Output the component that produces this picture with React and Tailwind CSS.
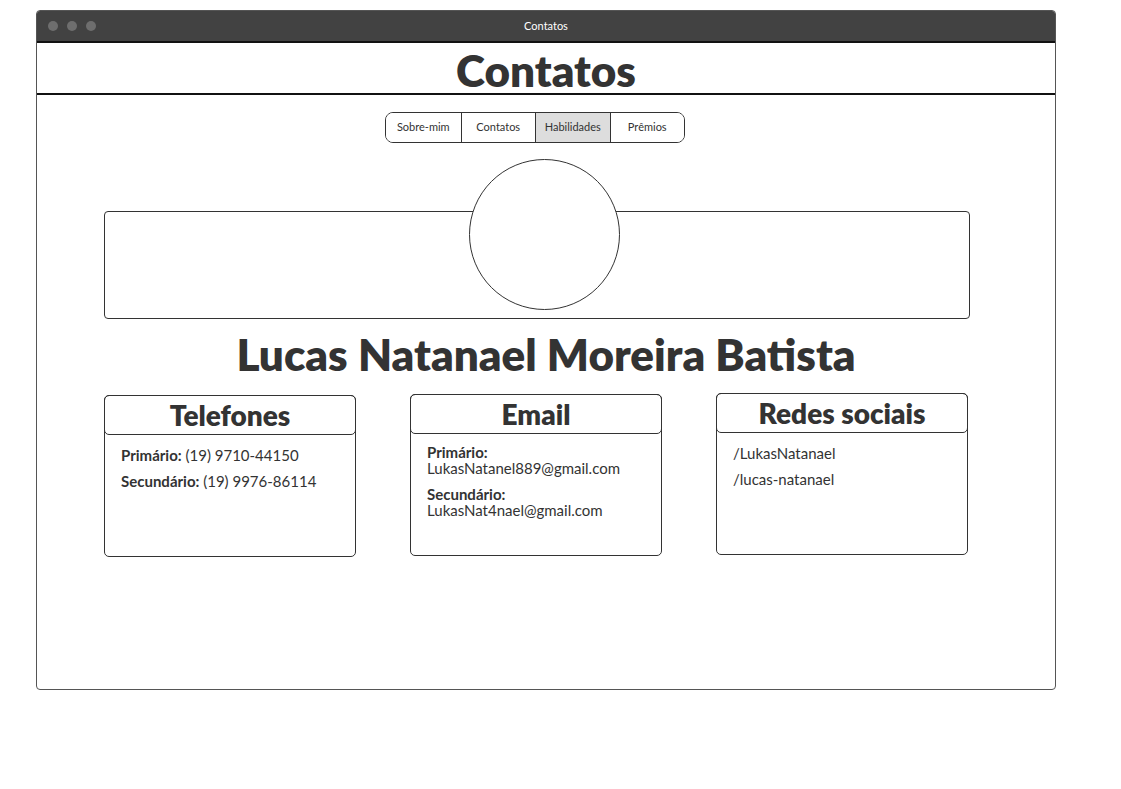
import React from "react";

const tabs = ["Sobre-mim", "Contatos", "Habilidades", "Prêmios"];

const Card = ({ title, children, className }) => {
  return (
    <div className={`w-[252px] h-[162px] border border-[#333] rounded-[5px] ${className}`}>
      <div className="-mx-px -mt-px h-[40px] border border-[#333] rounded-[5px] flex items-center justify-center">
        <h3 className="text-[28px] font-extrabold text-[#333] leading-none">{title}</h3>
      </div>
      <div className="pl-[16px] pr-2 pt-[10px] text-[15px] text-[#333]">{children}</div>
    </div>
  );
};

export default function App() {
  return (
    <div className="w-[1121px] h-[789px] bg-white pt-[10px] pl-[36px]" style={{ fontFamily: "Lato, 'Open Sans', sans-serif" }}>
      <div className="w-[1020px] h-[680px] border border-[#555] rounded-[4px] overflow-hidden flex flex-col">
        {/* title bar */}
        <div className="relative h-[32px] bg-[#424242] border-b-2 border-[#111] flex items-center shrink-0">
          <div className="flex gap-[9px] pl-[11px]">
            <span className="w-[10px] h-[10px] rounded-full bg-[#6e6e6e]" />
            <span className="w-[10px] h-[10px] rounded-full bg-[#6e6e6e]" />
            <span className="w-[10px] h-[10px] rounded-full bg-[#6e6e6e]" />
          </div>
          <span className="absolute inset-x-0 text-center text-[11px] text-white">Contatos</span>
        </div>

        {/* header */}
        <div className="h-[52px] border-b-2 border-[#111] flex items-center justify-center shrink-0 pt-[4px]">
          <h1 className="text-[44px] font-extrabold text-[#333] leading-none">Contatos</h1>
        </div>

        {/* tabs */}
        <div className="flex justify-center mt-[17px] pr-[22px]">
          <div className="flex h-[31px] border border-[#333] rounded-[8px] overflow-hidden">
            {tabs.map((t, i) => (
              <div
                key={t}
                className={`w-[74.5px] flex items-center justify-center text-[11px] text-[#333] ${
                  i > 0 ? "border-l border-[#333]" : ""
                } ${t === "Habilidades" ? "bg-[#ddd]" : "bg-white"}`}
              >
                {t}
              </div>
            ))}
          </div>
        </div>

        {/* banner */}
        <div className="relative mt-[16px] h-[160px] pl-[67px]">
          <div className="mt-[52px] w-[866px] h-[108px] border border-[#333] rounded-[4px]" />
          <div className="absolute top-0 left-[432px] w-[151px] h-[151px] rounded-full border border-[#333] bg-white" />
        </div>

        {/* name */}
        <h2 className="mt-[9px] text-center text-[44px] font-extrabold text-[#333] leading-[52px]">
          Lucas Natanael Moreira Batista
        </h2>

        {/* cards */}
        <div className="mt-[13px] flex gap-[54px] pl-[67px] items-start">
          <Card title="Telefones" className="mt-[2px]">
            <p className="leading-[20px]">
              <b>Primário:</b> (19) 9710-44150
            </p>
            <p className="leading-[20px] mt-[6px]">
              <b>Secundário:</b> (19) 9976-86114
            </p>
          </Card>
          <Card title="Email" className="mt-[1px]">
            <p className="leading-[16px]">
              <b>Primário:</b>
              <br />
              LukasNatanel889@gmail.com
            </p>
            <p className="leading-[16px] mt-[10px]">
              <b>Secundário:</b>
              <br />
              LukasNat4nael@gmail.com
            </p>
          </Card>
          <Card title="Redes sociais">
            <p className="leading-[20px]">/LukasNatanael</p>
            <p className="leading-[20px] mt-[6px]">/lucas-natanael</p>
          </Card>
        </div>
      </div>
    </div>
  );
}
